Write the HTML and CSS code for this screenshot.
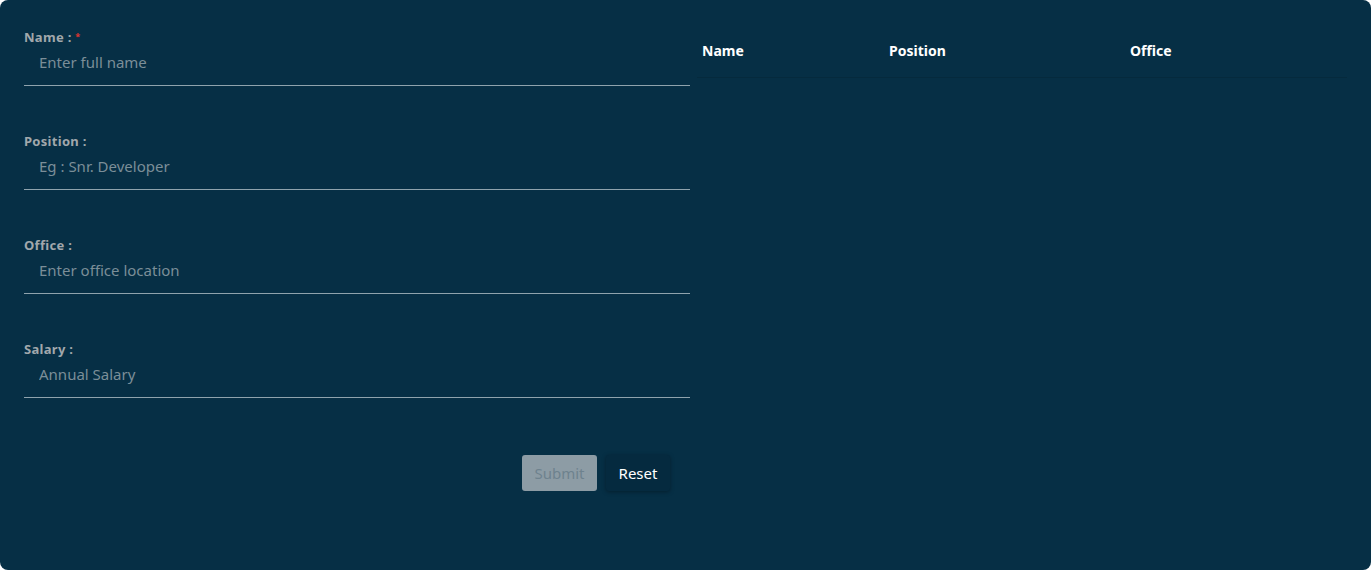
FILE: index.html
```html
<!DOCTYPE html>
<html>
<head>
<meta charset="utf-8">
<link rel="stylesheet" href="styles.css">
</head>
<body>
<div class="card">
  <form class="form">
    <div class="field">
      <label class="label">Name : <span class="req">*</span></label>
      <input class="input" type="text" placeholder="Enter full name">
    </div>
    <div class="field">
      <label class="label">Position :</label>
      <input class="input" type="text" placeholder="Eg : Snr. Developer">
    </div>
    <div class="field">
      <label class="label">Office :</label>
      <input class="input" type="text" placeholder="Enter office location">
    </div>
    <div class="field">
      <label class="label">Salary :</label>
      <input class="input" type="text" placeholder="Annual Salary">
    </div>
    <div class="actions">
      <button type="button" class="btn btn-submit" disabled>Submit</button>
      <button type="button" class="btn btn-reset">Reset</button>
    </div>
  </form>
  <div class="table-wrap">
    <table class="table">
      <thead>
        <tr>
          <th class="col-name">Name</th>
          <th class="col-pos">Position</th>
          <th class="col-office">Office</th>
        </tr>
      </thead>
      <tbody></tbody>
    </table>
  </div>
</div>
</body>
</html>
```
FILE: styles.css
```css
html, body {
  margin: 0;
  padding: 0;
  background: #ffffff;
}
body {
  font-family: "Noto Sans", "Open Sans", sans-serif;
}
.card {
  width: 1371px;
  height: 570px;
  box-sizing: border-box;
  background: #062f45;
  border-radius: 8px;
  padding: 24px 24px 0 24px;
  display: flex;
  gap: 7px;
}
.form {
  width: 666px;
  flex: none;
  padding-top: 5px;
}
.field {
  display: flex;
  flex-direction: column;
  margin-bottom: 47px;
}
.label {
  font-size: 13px;
  line-height: 16px;
  font-weight: 700;
  color: #a1a8ac;
  letter-spacing: 0.3px;
}
.req {
  color: #e0352f;
  font-size: 9px;
  vertical-align: top;
}
.input {
  height: 41px;
  box-sizing: border-box;
  border: none;
  border-bottom: 1px solid #8fa3ad;
  background: transparent;
  padding: 0 15px 7px 15px;
  font-family: inherit;
  font-size: 15px;
  color: #ffffff;
  outline: none;
}
.input::placeholder {
  color: #7b8e98;
}
.actions {
  display: flex;
  justify-content: flex-end;
  gap: 9px;
  padding-right: 20px;
  padding-top: 10px;
}
.btn {
  height: 36px;
  border: none;
  border-radius: 3px;
  font-family: inherit;
  font-size: 15px;
  padding: 0 11px;
}
.btn-submit {
  width: 75px;
  background: #8d9ca5;
  color: #6e828e;
}
.btn-reset {
  width: 64px;
  background: #052a3f;
  color: #ffffff;
  box-shadow: 0 1px 4px rgba(0, 0, 0, 0.35);
}
.table-wrap {
  width: 650px;
  flex: none;
}
.table {
  width: 100%;
  border-collapse: collapse;
}
.table th {
  text-align: left;
  font-size: 14px;
  line-height: 17px;
  font-weight: 700;
  color: #ffffff;
  padding: 18px 5px 18px 5px;
  border-bottom: 1px solid #052a3d;
}
.col-name { width: 177px; }
.col-pos { width: 231px; }
```
